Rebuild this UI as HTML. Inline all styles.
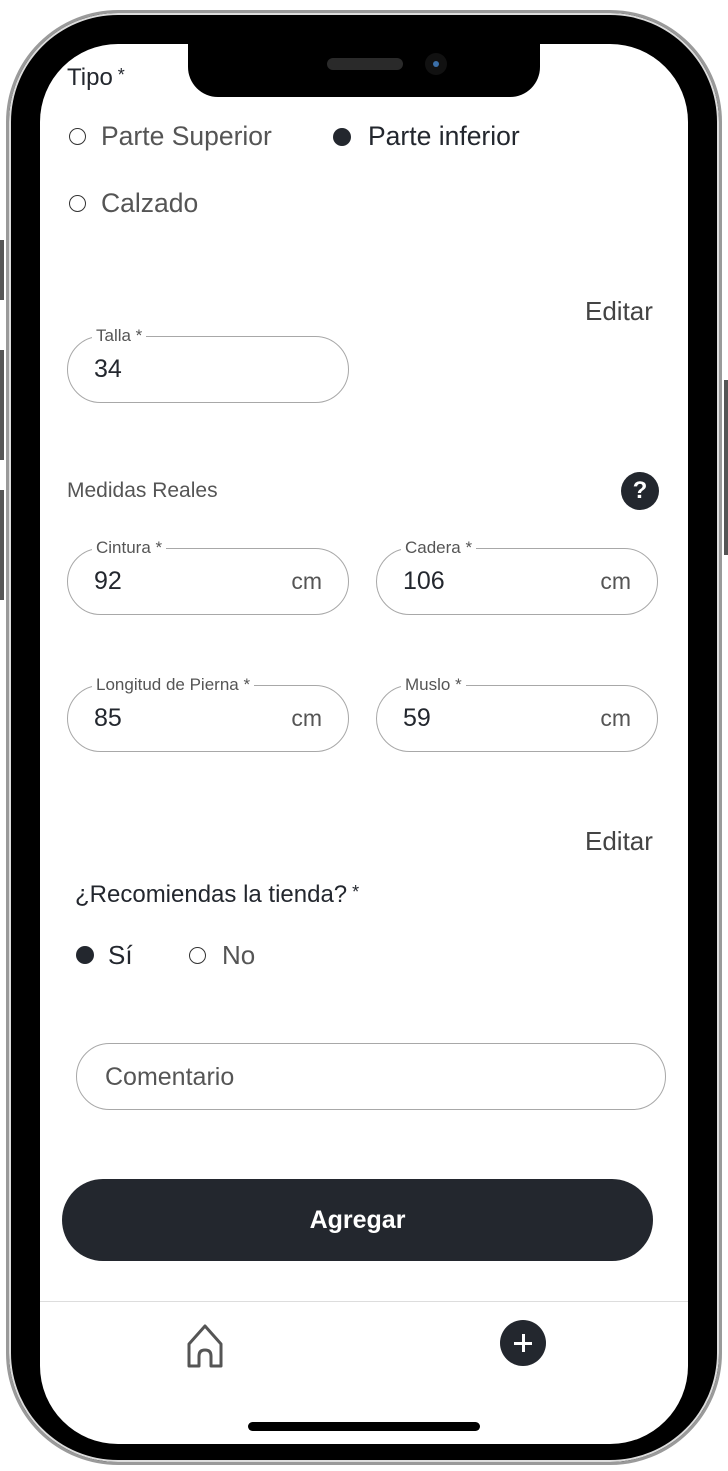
<!DOCTYPE html>
<html><head><meta charset="utf-8"><style>
*{margin:0;padding:0;box-sizing:border-box}
body{width:728px;height:1471px;background:#fff;position:relative;overflow:hidden;font-family:"Liberation Sans",sans-serif;color:#23272e}
.a{position:absolute;white-space:nowrap}
.frame{position:absolute;left:6px;top:10px;width:716px;height:1455px;border-radius:112px;background:#000;border:3px solid #9a9a9a;box-shadow:inset 0 0 0 2px #ddd}
.screen{position:absolute;left:40px;top:44px;width:648px;height:1400px;border-radius:78px;background:#fff;overflow:hidden}
.notch{position:absolute;left:188px;top:44px;width:352px;height:53px;background:#000;border-radius:0 0 30px 30px}
.t{position:absolute;white-space:nowrap;line-height:1}
.box{position:absolute;border:1.5px solid #a8a8a8;border-radius:34px;height:67px}
.lab{position:absolute;top:-12px;left:24px;background:#fff;padding:0 4px;font-size:17px;color:#555;line-height:22px}
.val{position:absolute;left:26px;top:18px;font-size:25px;line-height:28px;color:#23272e}
.cm{position:absolute;right:26px;top:18px;font-size:23px;line-height:28px;color:#555}
.ro{position:absolute;width:17px;height:17px;border:1.5px solid #333;border-radius:50%}
.rf{position:absolute;width:18px;height:18px;background:#23272e;border-radius:50%}
</style></head><body>
<div class="frame"></div>
<div class="a" style="left:0;top:240px;width:4px;height:60px;background:#555"></div>
<div class="a" style="left:0;top:350px;width:4px;height:110px;background:#555"></div>
<div class="a" style="left:0;top:490px;width:4px;height:110px;background:#555"></div>
<div class="a" style="left:724px;top:380px;width:4px;height:175px;background:#555"></div>
<div class="screen"></div>
<div class="notch"></div>
<div class="a" style="left:327px;top:58px;width:76px;height:12px;border-radius:6px;background:#2a2a2a"></div>
<div class="a" style="left:425px;top:53px;width:22px;height:22px;border-radius:50%;background:#111"></div>
<div class="a" style="left:433px;top:61px;width:6px;height:6px;border-radius:50%;background:#3b6fa8"></div>

<div class="t" style="left:67px;top:66px;font-size:24px">Tipo<span style="font-size:18px;vertical-align:top"> *</span></div>
<div class="ro" style="left:69px;top:128px"></div>
<div class="t" style="left:101px;top:123px;font-size:26.5px;color:#555">Parte Superior</div>
<div class="rf" style="left:333px;top:128px"></div>
<div class="t" style="left:368px;top:123px;font-size:26.5px">Parte inferior</div>
<div class="ro" style="left:69px;top:195px"></div>
<div class="t" style="left:101px;top:190px;font-size:26.5px;color:#555">Calzado</div>

<div class="t" style="left:585px;top:298px;font-size:26px;color:#444">Editar</div>
<div class="box" style="left:67px;top:336px;width:282px"><div class="lab">Talla *</div><div class="val">34</div></div>

<div class="t" style="left:67px;top:480px;font-size:21px;color:#555">Medidas Reales</div>
<div class="a" style="left:621px;top:472px;width:38px;height:38px;border-radius:50%;background:#23272e;color:#fff;font-size:24px;font-weight:bold;text-align:center;line-height:38px">?</div>

<div class="box" style="left:67px;top:548px;width:282px"><div class="lab">Cintura *</div><div class="val">92</div><div class="cm">cm</div></div>
<div class="box" style="left:376px;top:548px;width:282px"><div class="lab">Cadera *</div><div class="val">106</div><div class="cm">cm</div></div>
<div class="box" style="left:67px;top:685px;width:282px"><div class="lab">Longitud de Pierna *</div><div class="val">85</div><div class="cm">cm</div></div>
<div class="box" style="left:376px;top:685px;width:282px"><div class="lab">Muslo *</div><div class="val">59</div><div class="cm">cm</div></div>

<div class="t" style="left:585px;top:828px;font-size:26px;color:#444">Editar</div>
<div class="t" style="left:75px;top:883px;font-size:24px">¿Recomiendas la tienda?<span style="font-size:18px;vertical-align:top"> *</span></div>
<div class="rf" style="left:76px;top:946px"></div>
<div class="t" style="left:108px;top:942px;font-size:26px">Sí</div>
<div class="ro" style="left:189px;top:947px"></div>
<div class="t" style="left:222px;top:942px;font-size:26px;color:#555">No</div>

<div class="box" style="left:76px;top:1043px;width:590px"><div class="val" style="left:28px;top:19px;color:#555">Comentario</div></div>

<div class="a" style="left:62px;top:1179px;width:591px;height:82px;border-radius:41px;background:#23272e;color:#fff;font-size:25px;font-weight:bold;text-align:center;line-height:82px">Agregar</div>

<div class="a" style="left:40px;top:1301px;width:648px;height:1px;background:#ddd"></div>
<svg class="a" style="left:180px;top:1322px" width="50" height="50" viewBox="0 0 50 50"><path d="M9 22 L25 4 L41 22 V44 H31 V34 Q31 28 25 28 Q19 28 19 34 V44 H9 Z" fill="none" stroke="#555" stroke-width="3" stroke-linejoin="round"/></svg>
<div class="a" style="left:500px;top:1320px;width:46px;height:46px;border-radius:50%;background:#23272e"></div>
<div class="a" style="left:514px;top:1342px;width:18px;height:3px;background:#fff"></div>
<div class="a" style="left:521.5px;top:1334px;width:3px;height:18px;background:#fff"></div>
<div class="a" style="left:248px;top:1422px;width:232px;height:9px;border-radius:5px;background:#000"></div>
</body></html>
